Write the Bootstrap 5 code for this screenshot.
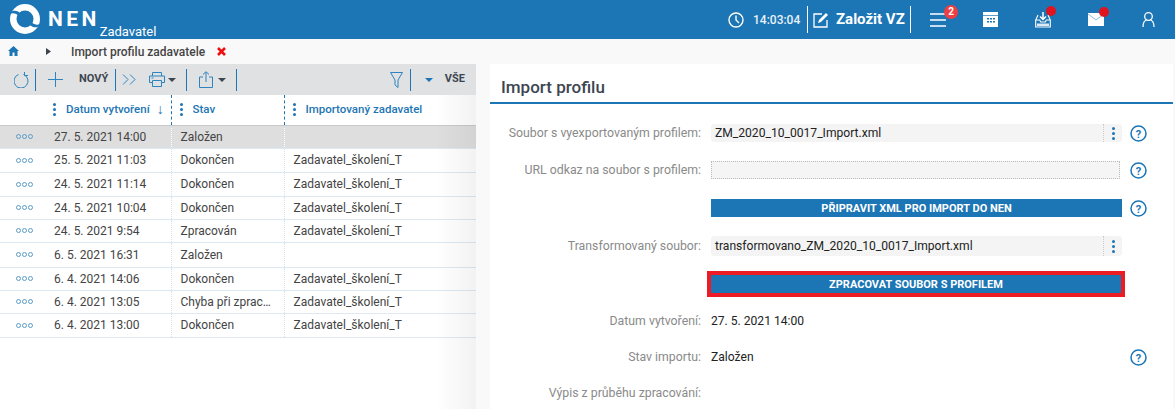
<!DOCTYPE html>
<html lang="cs">
<head>
  <meta charset="UTF-8">
  <meta name="viewport" content="width=device-width, initial-scale=1">
  <title>Import profilu zadavatele | NEN</title>
  <link href="https://cdn.jsdelivr.net/npm/bootstrap@5.3.0/dist/css/bootstrap.min.css" rel="stylesheet">
  <style>
    html, body { height: 100%; overflow: hidden; }
    body { font-family: Roboto, "Liberation Sans", sans-serif; font-size: 12px; color: #333; background: #f9f9f9; }
    svg { display: block; flex: none; }

    .top-bar { height: 39px; background: #1c75b4; color: #fff; }
    .brand-nen { font-size: 21px; font-weight: 700; letter-spacing: 3.4px; line-height: 1; margin-left: 7px; margin-top: 9px; }
    .brand-sub { font-size: 13px; line-height: 1; margin-left: 0; margin-top: 25px; }
    .top-time { font-size: 12px; font-weight: 500; margin-left: 9px; width: 54px; color: #e8f1f8; }
    .top-sep { width: 1px; height: 27px; background: #fff; }
    .top-new { font-size: 15px; font-weight: 700; margin-left: 7px; width: 74px; white-space: nowrap; }
    .top-ico { position: relative; }
    .dot-red { position: absolute; width: 10px; height: 10px; border-radius: 50%; background: #e0141e; top: -6px; right: -6px; }
    .dot-count { position: absolute; width: 14px; height: 14px; border-radius: 50%; background: #ef3e42; top: -7px; right: -12px; font-size: 10px; font-weight: 700; line-height: 14px; text-align: center; }

    .crumb-bar { height: 25px; background: #f9f9f9; }
    .crumb-title { font-size: 12px; font-weight: 500; color: #444; margin-left: 20px; }
    .crumb-x { margin-left: 12px; }

    .split { height: 345px; }
    .left-pane { width: 476px; background: #fff; position: relative; }
    .left-pane::after { content: ""; position: absolute; top: 31px; right: 0; bottom: 0; width: 40px; background: linear-gradient(90deg, rgba(0,0,0,0), rgba(0,0,0,.05)); pointer-events: none; }
    .tool-bar { height: 31px; background: #dfe1e3; }
    .tool-sep { width: 1px; height: 22px; background: #1c75b4; }
    .tool-txt { font-size: 11px; font-weight: 700; color: #3d4650; }
    .caret-dn { width: 0; height: 0; border-left: 4px solid transparent; border-right: 4px solid transparent; border-top: 4.500px solid #3d4650; }

    .grid-tbl { table-layout: fixed; width: 476px; margin: 0; font-size: 12px; }
    .grid-tbl th { height: 30px; padding: 0; font-weight: 500; color: #1c75b4; font-size: 11.5px; border-bottom: 1px solid #c9c9c9; border-right: 1px dashed #1c75b4; vertical-align: middle; white-space: nowrap; }
    .grid-tbl th:last-child, .grid-tbl td:last-child { border-right: 0; }
    .grid-tbl th:first-child, .grid-tbl td:first-child { border-right: 0; }
    .grid-tbl td { padding: 0 0 0 9px; border-bottom: 1px solid #dde8f0; border-right: 1px dotted #d5e2ea; vertical-align: middle; color: #444; white-space: nowrap; overflow: hidden; }
    .grid-tbl td.cell-date { padding-left: 8px; }
    .grid-tbl td.cell-acts { padding-left: 16px; }
    .grid-tbl tr.row-active td { background: #dedede; }
    .th-in { display: flex; align-items: center; }
    .kebab { display: flex; flex-direction: column; gap: 2px; width: 3px; }
    .kebab span { width: 3px; height: 3px; border-radius: 50%; background: #1c75b4; display: block; }
    .acts { display: flex; gap: 1px; }
    .acts span { width: 5px; height: 5px; border-radius: 50%; border: 1px solid #5a9ccb; display: block; }

    .right-pane { width: 683px; margin-left: 14px; background: #fff; }
    .panel-title { height: 40px; border-bottom: 2px solid #1c75b4; font-size: 17px; font-weight: 500; color: #3d4650; padding: 13px 0 0 11px; line-height: 20px; }
    .frm-row { display: flex; align-items: center; height: 18px; }
    .frm-lbl { width: 216px; padding-right: 5px; text-align: right; color: #8a8a8a; font-size: 12.300px; white-space: nowrap; flex: none; }
    .frm-val { width: 411px; margin-left: 5px; flex: none; color: #222; font-size: 12.100px; }
    .frm-file { height: 100%; background: #f4f4f4; border-radius: 3px; display: flex; align-items: center; justify-content: space-between; padding-left: 4px; }
    .frm-kebab { height: 100%; width: 19px; border-left: 1px dotted #ccc; display: flex; align-items: center; justify-content: center; }
    .frm-empty { height: 100%; background: #f5f5f5; border: 1px dotted #bbb; width: 409px; }
    .btn-nen { height: 100%; width: 100%; padding: 0; border: 0; border-radius: 0; background: #1c75b4; color: #fff; font-size: 11px; font-weight: 700; line-height: 1; display: block; }
    .btn-frame { width: 418px; height: 26px; margin-left: 1px; border: 4px solid #ed1c24; flex: none; }
    .help-ico { margin-left: 8px; }
    .gap-a { margin-top: 19px; }
    .gap-b { margin-top: 18px; }
    .row-tall { height: 20px; }
  </style>
</head>
<body>
  <header class="top-bar d-flex align-items-start">
    <svg style="margin:3px 0 0 9px" width="32" height="32" viewBox="0 0 32 32">
      <circle cx="16" cy="16" r="15" fill="#fff"/>
      <circle cx="16" cy="16" r="8.500" fill="#1c75b4"/>
      <path d="M1 9.500C4 7 8 7 11 10L9 12.500C7 10.500 4 9.500 1 11zM31 22.500C28 25 24 25 21 22L23 19.500C25 21.500 28 22.500 31 21z" fill="#1c75b4"/>
    </svg>
    <div class="brand-nen">NEN</div>
    <div class="brand-sub">Zadavatel</div>
    <div class="d-flex align-items-center ms-auto h-100">
      <svg width="16" height="16" viewBox="0 0 16 16" fill="none" stroke="#fff" stroke-width="1.400"><circle cx="8" cy="8" r="7"/><path d="M8 3.500V8l3 3"/></svg>
      <span class="top-time">14:03:04</span>
      <span class="top-sep"></span>
      <svg style="margin-left:5px" width="16" height="16" viewBox="0 0 16 16" fill="none" stroke="#fff" stroke-width="1.300"><path d="M14 8v7H1V2h8"/><path d="M6 8l7-7 2 2-7 7-3 1z" fill="#fff" stroke="none"/></svg>
      <span class="top-new">Založit VZ</span>
      <span class="top-sep"></span>
      <div class="top-ico" style="margin-left:19px">
        <svg width="16" height="15" viewBox="0 0 16 15" stroke="#fff" stroke-width="1.500"><path d="M0 2h16M0 8h16M0 14h16"/></svg>
        <span class="dot-count">2</span>
      </div>
      <div class="top-ico" style="margin-left:37px">
        <svg width="15" height="15" viewBox="0 0 15 15"><path fill="#fff" d="M0 0h15v15H0z"/><path fill="#1c75b4" d="M4 6h2v1.500H4zM7 6h2v1.500H7zM10 6h2v1.500h-2zM4 9h2v1.500H4zM7 9h2v1.500H7zM10 9h2v1.500h-2z"/><path stroke="#1c75b4" stroke-width=".7" d="M0 3.500h15"/></svg>
      </div>
      <div class="top-ico" style="margin-left:37px">
        <svg width="16" height="16" viewBox="0 0 16 16" fill="none" stroke="#fff" stroke-width="1.100"><path d="M8 0v7M5 4.500L8 7.500l3-3" stroke-width="1.500"/><path d="M3 3L.7 8v7h14.600V8L13 3"/><path d="M.7 8h4l1 2h4.600l1-2h4"/><path fill="#fff" stroke="none" opacity=".85" d="M2 11.500h12V14H2z"/></svg>
        <span class="dot-red" style="right:-5px"></span>
      </div>
      <div class="top-ico" style="margin-left:37px">
        <svg width="16" height="13" viewBox="0 0 16 13"><path fill="#fff" d="M0 0h16v13H0z"/><path fill="none" stroke="#8fbfe0" stroke-width="1" d="M0 1l8 6 8-6"/></svg>
        <span class="dot-red" style="right:-5px"></span>
      </div>
      <svg style="margin-left:38px;margin-right:20px" width="13" height="15" viewBox="0 0 13 15" fill="none" stroke="#fff" stroke-width="1.300"><circle cx="6.500" cy="4.500" r="3.800"/><path d="M1 15c0-4 2-6.500 3.500-7M12 15c0-4-2-6.500-3.500-7"/></svg>
    </div>
  </header>

  <nav class="crumb-bar d-flex align-items-center">
    <svg class="ms-2" style="margin-top:-1px" width="11" height="10" viewBox="0 0 11 10"><path fill="#1c75b4" d="M5.500 0L11 5H9.500v5H6.500V6.500h-2V10H1.500V5H0z"/></svg>
    <svg style="margin-left:27px" width="5" height="7" viewBox="0 0 5 7"><path fill="#3d4650" d="M0 0l5 3.500L0 7z"/></svg>
    <span class="crumb-title">Import profilu zadavatele</span>
    <svg class="crumb-x" width="9" height="9" viewBox="0 0 9 9" stroke="#ee1111" stroke-width="2.600"><path d="M1 1l7 7M8 1L1 8"/></svg>
  </nav>

  <main class="split d-flex align-items-stretch">
    <section class="left-pane flex-none">
      <div class="tool-bar d-flex align-items-center">
        <svg style="margin-left:14px" width="15" height="16" viewBox="0 0 15 16" fill="none" stroke="#2d84bf" stroke-width="1"><path d="M4.500 2.500a7 7 0 1 0 5 0"/><path d="M10.500 0v3.500H14"/></svg>
        <span class="tool-sep" style="margin-left:6px"></span>
        <svg style="margin-left:12px" width="15" height="15" viewBox="0 0 15 15" stroke="#2d84bf" stroke-width="1"><path d="M7.500 0v15M0 7.500h15"/></svg>
        <span class="tool-txt" style="margin-left:16px">NOVÝ</span>
        <span class="tool-sep" style="margin-left:7px"></span>
        <svg style="margin-left:6px" width="14" height="11" viewBox="0 0 14 11" fill="none" stroke="#2d84bf" stroke-width="1"><path d="M1 .500l5 5-5 5M8 .500l5 5-5 5"/></svg>
        <svg style="margin-left:13px" width="16" height="15" viewBox="0 0 16 15" fill="none" stroke="#2d84bf" stroke-width="1"><path d="M3.500 4V.500h9V4M3.500 10.500h-3V4h15v6.500h-3M3.500 8.500h9v6h-9z"/><path d="M2.500 6h2"/></svg>
        <span class="caret-dn" style="margin-left:3px"></span>
        <span class="tool-sep" style="margin-left:10px"></span>
        <svg style="margin-left:12px" width="14" height="17" viewBox="0 0 14 17" fill="none" stroke="#2d84bf" stroke-width="1"><path d="M4 6H.500v10.500h13V6H10M7 11V1M4 3.500L7 .700l3 2.800"/></svg>
        <span class="caret-dn" style="margin-left:5px"></span>
        <span class="tool-sep" style="margin-left:10px"></span>
        <svg class="ms-auto" width="13" height="16" viewBox="0 0 13 16" fill="none" stroke="#2d84bf" stroke-width="1"><path d="M.500.500h12L8 8v7.500L5 13V8z"/></svg>
        <span class="tool-sep" style="margin-left:7px"></span>
        <span class="caret-dn" style="margin-left:14px;border-top-color:#1c75b4"></span>
        <span class="tool-txt" style="margin-left:12px;margin-right:11px">VŠE</span>
      </div>
      <table class="grid-tbl">
        <colgroup><col style="width:46px"><col style="width:125px"><col style="width:113px"><col style="width:192px"></colgroup>
        <thead>
          <tr>
            <th></th>
            <th><div class="th-in"><span class="kebab" style="margin-left:7px"><span></span><span></span><span></span></span><span style="margin-left:10px">Datum vytvoření</span><span style="margin-left:7px;font-size:14px;font-weight:400">↓</span></div></th>
            <th><div class="th-in"><span class="kebab" style="margin-left:8px"><span></span><span></span><span></span></span><span style="margin-left:10px">Stav</span></div></th>
            <th><div class="th-in"><span class="kebab" style="margin-left:8px"><span></span><span></span><span></span></span><span style="margin-left:10px">Importovaný zadavatel</span></div></th>
          </tr>
        </thead>
        <tbody id="rows"></tbody>
      </table>
    </section>

    <section class="right-pane">
      <h1 class="panel-title m-0">Import profilu</h1>
      <div class="frm-row" style="margin-top:20px">
        <span class="frm-lbl">Soubor s vyexportovaným profilem:</span>
        <div class="frm-val frm-file"><span>ZM_2020_10_0017_Import.xml</span><span class="frm-kebab"><span class="kebab"><span></span><span></span><span></span></span></span></div>
        <svg class="help-ico" width="17" height="17" viewBox="0 0 17 17"><circle cx="8.500" cy="8.500" r="7.500" fill="none" stroke="#1c75b4" stroke-width="1.500"/><text x="8.500" y="12.500" text-anchor="middle" font-family="Roboto" font-size="11" font-weight="700" fill="#1c75b4">?</text></svg>
      </div>
      <div class="frm-row gap-a">
        <span class="frm-lbl">URL odkaz na soubor s profilem:</span>
        <div class="frm-val h-100"><div class="frm-empty"></div></div>
        <svg class="help-ico" width="17" height="17" viewBox="0 0 17 17"><circle cx="8.500" cy="8.500" r="7.500" fill="none" stroke="#1c75b4" stroke-width="1.500"/><text x="8.500" y="12.500" text-anchor="middle" font-family="Roboto" font-size="11" font-weight="700" fill="#1c75b4">?</text></svg>
      </div>
      <div class="frm-row" style="margin-top:20px">
        <span class="frm-lbl"></span>
        <div class="frm-val h-100"><button type="button" class="btn btn-nen">PŘIPRAVIT XML PRO IMPORT DO NEN</button></div>
        <svg class="help-ico" width="17" height="17" viewBox="0 0 17 17"><circle cx="8.500" cy="8.500" r="7.500" fill="none" stroke="#1c75b4" stroke-width="1.500"/><text x="8.500" y="12.500" text-anchor="middle" font-family="Roboto" font-size="11" font-weight="700" fill="#1c75b4">?</text></svg>
      </div>
      <div class="frm-row row-tall gap-a">
        <span class="frm-lbl">Transformovaný soubor:</span>
        <div class="frm-val frm-file"><span>transformovano_ZM_2020_10_0017_Import.xml</span><span class="frm-kebab"><span class="kebab"><span></span><span></span><span></span></span></span></div>
      </div>
      <div class="frm-row" style="margin-top:15px;height:26px">
        <span class="frm-lbl"></span>
        <div class="btn-frame"><button type="button" class="btn btn-nen">ZPRACOVAT SOUBOR S PROFILEM</button></div>
      </div>
      <div class="frm-row" style="margin-top:15px">
        <span class="frm-lbl">Datum vytvoření:</span>
        <div class="frm-val">27. 5. 2021 14:00</div>
      </div>
      <div class="frm-row gap-b">
        <span class="frm-lbl">Stav importu:</span>
        <div class="frm-val">Založen</div>
        <svg class="help-ico" width="17" height="17" viewBox="0 0 17 17"><circle cx="8.500" cy="8.500" r="7.500" fill="none" stroke="#1c75b4" stroke-width="1.500"/><text x="8.500" y="12.500" text-anchor="middle" font-family="Roboto" font-size="11" font-weight="700" fill="#1c75b4">?</text></svg>
      </div>
      <div class="frm-row gap-b">
        <span class="frm-lbl">Výpis z průběhu zpracování:</span>
      </div>
    </section>
  </main>

  <script src="https://cdn.jsdelivr.net/npm/bootstrap@5.3.0/dist/js/bootstrap.bundle.min.js"></script>
  <script>
    const data = [
      ['27. 5. 2021 14:00', 'Založen', '', 23],
      ['25. 5. 2021 11:03', 'Dokončen', 'Zadavatel_školení_T', 24],
      ['24. 5. 2021 11:14', 'Dokončen', 'Zadavatel_školení_T', 24],
      ['24. 5. 2021 10:04', 'Dokončen', 'Zadavatel_školení_T', 23],
      ['24. 5. 2021 9:54', 'Zpracován', 'Zadavatel_školení_T', 23],
      ['6. 5. 2021 16:31', 'Založen', '', 25],
      ['6. 4. 2021 14:06', 'Dokončen', 'Zadavatel_školení_T', 23],
      ['6. 4. 2021 13:05', 'Chyba při zprac…', 'Zadavatel_školení_T', 23],
      ['6. 4. 2021 13:00', 'Dokončen', 'Zadavatel_školení_T', 24]
    ];
    document.getElementById('rows').innerHTML = data.map((r, i) =>
      `<tr class="${i === 0 ? 'row-active' : ''}" style="height:${r[3]}px">
        <td class="cell-acts"><span class="acts"><span></span><span></span><span></span></span></td>
        <td class="cell-date">${r[0]}</td><td>${r[1]}</td><td>${r[2]}</td>
      </tr>`).join('');
  </script>
</body>
</html>
